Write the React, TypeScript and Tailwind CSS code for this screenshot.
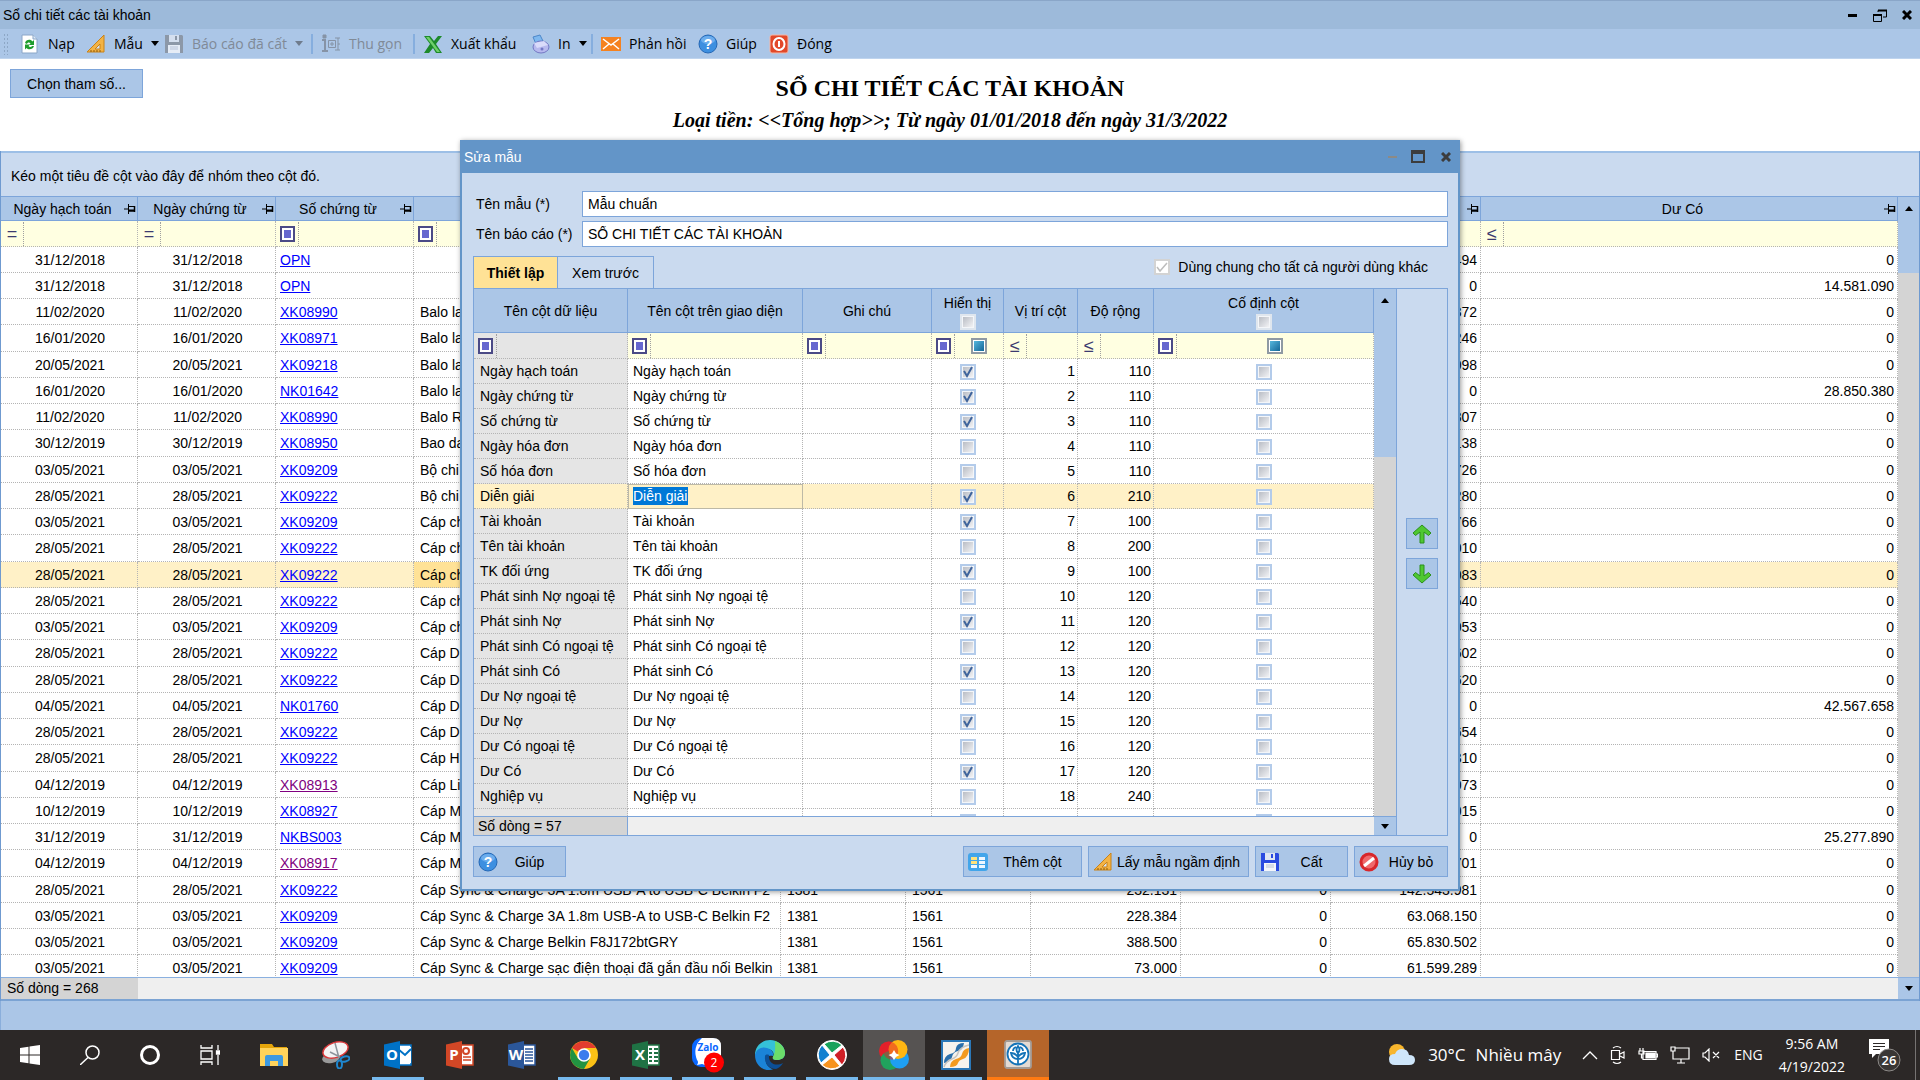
import type { ReactNode } from "react"
import clsx from "clsx"

/* ---------- data ---------- */

type Entry = {
  date: string
  code: string
  visited?: boolean
  desc?: string
  account?: string
  contra?: string
  debit?: string
  credit?: string
  balance: string
  creditBalance?: string
}

const CABLE = "Cáp Sync & Charge 3A 1.8m USB-A to USB-C Belkin F2"

const entries: Entry[] = [
  { date: "31/12/2018", code: "OPN", balance: "494" },
  { date: "31/12/2018", code: "OPN", balance: "0", creditBalance: "14.581.090" },
  { date: "11/02/2020", code: "XK08990", desc: "Balo la", balance: "372" },
  { date: "16/01/2020", code: "XK08971", desc: "Balo la", balance: "246" },
  { date: "20/05/2021", code: "XK09218", desc: "Balo la", balance: "098" },
  { date: "16/01/2020", code: "NK01642", desc: "Balo la", balance: "0", creditBalance: "28.850.380" },
  { date: "11/02/2020", code: "XK08990", desc: "Balo R", balance: "307" },
  { date: "30/12/2019", code: "XK08950", desc: "Bao da", balance: "138" },
  { date: "03/05/2021", code: "XK09209", desc: "Bộ chi", balance: "726" },
  { date: "28/05/2021", code: "XK09222", desc: "Bộ chi", balance: "280" },
  { date: "03/05/2021", code: "XK09209", desc: "Cáp ch", balance: "766" },
  { date: "28/05/2021", code: "XK09222", desc: "Cáp ch", balance: "010" },
  { date: "28/05/2021", code: "XK09222", desc: "Cáp ch", balance: "083" },
  { date: "28/05/2021", code: "XK09222", desc: "Cáp ch", balance: "540" },
  { date: "03/05/2021", code: "XK09209", desc: "Cáp ch", balance: "053" },
  { date: "28/05/2021", code: "XK09222", desc: "Cáp D", balance: "602" },
  { date: "28/05/2021", code: "XK09222", desc: "Cáp D", balance: "620" },
  { date: "04/05/2021", code: "NK01760", desc: "Cáp D", balance: "0", creditBalance: "42.567.658" },
  { date: "28/05/2021", code: "XK09222", desc: "Cáp D", balance: "654" },
  { date: "28/05/2021", code: "XK09222", desc: "Cáp HD", balance: "310" },
  { date: "04/12/2019", code: "XK08913", visited: true, desc: "Cáp Lig", balance: "073" },
  { date: "10/12/2019", code: "XK08927", desc: "Cáp M", balance: "015" },
  { date: "31/12/2019", code: "NKBS003", desc: "Cáp M", balance: "0", creditBalance: "25.277.890" },
  { date: "04/12/2019", code: "XK08917", visited: true, desc: "Cáp M", balance: "701" },
  { date: "28/05/2021", code: "XK09222", desc: CABLE, account: "1381", contra: "1561", debit: "232.131", credit: "0", balance: "142.543.981" },
  { date: "03/05/2021", code: "XK09209", desc: CABLE, account: "1381", contra: "1561", debit: "228.384", credit: "0", balance: "63.068.150" },
  { date: "03/05/2021", code: "XK09209", desc: "Cáp Sync & Charge Belkin F8J172btGRY", account: "1381", contra: "1561", debit: "388.500", credit: "0", balance: "65.830.502" },
  { date: "03/05/2021", code: "XK09209", desc: "Cáp Sync & Charge sạc điện thoại đã gắn đầu nối Belkin", account: "1381", contra: "1561", debit: "73.000", credit: "0", balance: "61.599.289" },
]
const SELECTED_ENTRY = 12

type Column = { name: string; shown: boolean; width: number }

const columns: Column[] = [
  { name: "Ngày hạch toán", shown: true, width: 110 },
  { name: "Ngày chứng từ", shown: true, width: 110 },
  { name: "Số chứng từ", shown: true, width: 110 },
  { name: "Ngày hóa đơn", shown: false, width: 110 },
  { name: "Số hóa đơn", shown: false, width: 110 },
  { name: "Diễn giải", shown: true, width: 210 },
  { name: "Tài khoản", shown: true, width: 100 },
  { name: "Tên tài khoản", shown: false, width: 200 },
  { name: "TK đối ứng", shown: true, width: 100 },
  { name: "Phát sinh Nợ ngoại tệ", shown: false, width: 120 },
  { name: "Phát sinh Nợ", shown: true, width: 120 },
  { name: "Phát sinh Có ngoại tệ", shown: false, width: 120 },
  { name: "Phát sinh Có", shown: true, width: 120 },
  { name: "Dư Nợ ngoại tệ", shown: false, width: 120 },
  { name: "Dư Nợ", shown: true, width: 120 },
  { name: "Dư Có ngoại tệ", shown: false, width: 120 },
  { name: "Dư Có", shown: true, width: 120 },
  { name: "Nghiệp vụ", shown: false, width: 240 },
]
const EDITED_COLUMN = 5

/* ---------- small icons ---------- */

const RefreshIcon = () => (
  <svg viewBox="0 0 20 20" className="size-5">
    <path d="M2 1h11l4 4v14H2z" fill="#fff" stroke="#8aa6c8" />
    <path d="M13 1v4h4" fill="#dbe8f6" stroke="#8aa6c8" />
    <path d="M5 9c1-4 6-4 7.500-1.500L14 6v5H9l1.500-1.500C9.500 8 7.500 8 7 10zM14 12c-1 4-6 4-7.500 2L5 15.500v-5h5L8.500 12c1 1.500 3 1.300 3.500 0z" fill="#1f9d2c" />
  </svg>
)

const RulerIcon = () => (
  <svg viewBox="0 0 20 20" className="size-5">
    <path d="M18 1v17H1z" fill="#f3b345" stroke="#c98218" />
    <path d="M14 10v5H9z" fill="#d5e3f5" stroke="#c98218" />
    <path d="M5 18v-2M8 18v-2M11 18v-2M14 18v-2" stroke="#8d5a0d" />
  </svg>
)

const FloppyIcon = ({ color }: { color: string }) => (
  <svg viewBox="0 0 20 20" className="size-5">
    <path d="M1 1h17l1 1v17H1z" fill={color} />
    <path d="M5 1h10v7H5z" fill="#dfe6f2" />
    <path d="M11 2h2v4h-2z" fill={color} />
    <path d="M4 11h12v8H4z" fill="#f4f6fa" />
    <path d="M6 13h8M6 15h8" stroke="#b9c2d4" />
  </svg>
)

const CollapseIcon = () => (
  <svg viewBox="0 0 20 20" className="size-5" fill="none" stroke="#7d8796">
    <path d="M1 6h3v11M1 17h6" strokeWidth="2" />
    <path d="M2 1h3v3H2z" fill="#7d8796" />
    <path d="M7.500 6.500h7v7h-7zM9 10h4M11 8v4M14 4h5M14 16h5M17 4v12M17 10h2" />
  </svg>
)

const ExcelXIcon = () => (
  <svg viewBox="0 0 20 20" className="size-5">
    <path d="M1 2h6l4 5 4-5h4l-6 8 6 9h-6l-3-5-4 5H1l6-9z" fill="#1d8a2a" />
    <path d="M3 3h3l11 15h-3z" fill="#6fd06a" />
  </svg>
)

const PrinterIcon = () => (
  <svg viewBox="0 0 20 20" className="size-5">
    <path d="M3 3l7-2 3 6-7 3z" fill="#7fb8ef" stroke="#4d87c9" />
    <ellipse cx="11" cy="13" rx="8" ry="6" fill="#b7b9ee" stroke="#7378c4" />
    <path d="M4 9l10-2 4 4-11 3z" fill="#d9dbfa" />
    <circle cx="12" cy="15" r="1.500" fill="#7378c4" />
  </svg>
)

const MailIcon = () => (
  <svg viewBox="0 0 20 20" className="size-5">
    <path d="M0 3h20v14H0z" fill="#f58220" />
    <path d="M2 5l8 6 8-6M2 15l6-5M18 15l-6-5" fill="none" stroke="#fff" strokeWidth="1.500" />
  </svg>
)

const HelpIcon = () => (
  <svg viewBox="0 0 20 20" className="size-5">
    <circle cx="10" cy="10" r="9" fill="#3d8fe0" stroke="#2467b5" />
    <ellipse cx="10" cy="6" rx="7" ry="4" fill="#8cc2f5" opacity="0.6" />
    <text x="10" y="15" textAnchor="middle" fontSize="14" fontWeight="700" fill="#fff" fontFamily="Liberation Sans, sans-serif">?</text>
  </svg>
)

const PowerIcon = () => (
  <svg viewBox="0 0 20 20" className="size-5">
    <rect x="1" y="1" width="18" height="18" rx="2" fill="#e2492a" stroke="#f4b7a6" />
    <ellipse cx="10" cy="10" rx="5.500" ry="6" fill="none" stroke="#fff" strokeWidth="2" />
    <path d="M10 7v6" stroke="#fff" strokeWidth="2" />
  </svg>
)

const AddColumnIcon = () => (
  <svg viewBox="0 0 20 20" className="size-5">
    <rect x="0" y="1" width="20" height="18" rx="3" fill="#42a5ea" />
    <path d="M3 5h6v3H3zM11 5h6v3h-6zM11 9h6v3h-6zM3 13h6v3H3zM11 13h6v3h-6z" fill="#eef7ff" />
    <path d="M3 9h6v3H3zM3 5h6v3H3z" fill="#ffe27a" />
  </svg>
)

const ForbidIcon = () => (
  <svg viewBox="0 0 20 20" className="size-5">
    <circle cx="10" cy="10" r="8" fill="#f0696b" stroke="#d8272b" strokeWidth="3" />
    <path d="M5 14L15 6" stroke="#fff" strokeWidth="3" />
  </svg>
)

const ArrowIcon = ({ down }: { down?: boolean }) => (
  <svg viewBox="0 0 20 20" className={clsx("size-5", down && "rotate-180")}>
    <path d="M10 1l9 8-2.500 2.500L12 8v11H8V8l-4.500 3.500L1 9z" fill="#4fc832" stroke="#2b8f1c" strokeLinejoin="round" />
  </svg>
)

const Pin = () => (
  <svg viewBox="0 0 12 10" className="h-[10px] w-3 shrink-0" fill="none" stroke="#000">
    <path d="M0 5h4M4.500 0v10M4.500 2.500h6M4.500 7h6" />
    <path d="M10.500 2v6" strokeWidth="1.500" />
    <path d="M5 6.500h6" strokeWidth="2" />
  </svg>
)

const Caret = ({ up, muted }: { up?: boolean; muted?: boolean }) => (
  <svg viewBox="0 0 8 5" className={clsx("h-[5px] w-2 shrink-0", up && "rotate-180")}>
    <path d="M0 0h8L4 5z" fill={muted ? "#6f7c8d" : "#000"} />
  </svg>
)

/* ---------- shared parts ---------- */

const BoxMark = () => (
  <span className="flex h-[16px] w-[15px] shrink-0 items-center justify-center border-2 border-[#4b4a86] bg-white">
    <span className="h-[8px] w-[7px] bg-[#6667cf]" />
  </span>
)

const OpMark = ({ op }: { op: string }) =>
  op === "box" ? <BoxMark /> : <span className="w-[15px] text-center text-lg leading-4 text-[#3b3a70]">{op}</span>

function FilterCell({ op, gray, children }: { op?: string; gray?: boolean; children?: ReactNode }) {
  return (
    <td className={clsx("border-r border-b border-dotted border-[#b4b4b4] p-0", gray ? "bg-[#e5e5e5]" : "bg-[#ffffe1]")}>
      {op && (
        <div className="flex h-[24px] items-center">
          <span className="flex h-full w-[23px] items-center justify-center border-r border-dotted border-[#a0a0a0]">
            <OpMark op={op} />
          </span>
          {children}
        </div>
      )}
    </td>
  )
}

function Tick({ label, checked, disabled, bare }: { label: string; checked?: boolean; disabled?: boolean; bare?: boolean }) {
  return (
    <span className="relative inline-block size-4 align-middle">
      <input
        type="checkbox"
        aria-label={label}
        defaultChecked={checked}
        disabled={disabled}
        className={clsx(
          "peer block size-4 appearance-none border-2",
          disabled ? "border-[#d3d3d3] bg-white" : "bg-linear-to-br from-[#b4b8c0] to-[#f8f8fa] shadow-[inset_0_0_0_1px_#f4f6f9]",
          !disabled && (bare ? "border-[#dfe6ee]" : "border-[#b3cbea]"),
        )}
      />
      <svg viewBox="0 0 16 16" className="pointer-events-none absolute inset-0 hidden size-4 peer-checked:block">
        <path d={disabled ? "M3 8l3 4 7-8" : "M4 7l3 5 5-9"} fill="none" stroke={disabled ? "#bdbdbd" : "#3f649c"} strokeWidth={disabled ? 1.5 : 2} />
      </svg>
    </span>
  )
}

const MixedBox = () => (
  <span className="block size-4 border-2 border-[#8f9aa3] bg-linear-to-br from-[#5cc0e4] to-[#075f91] outline-1 -outline-offset-3 outline-white" />
)

/* ---------- main window ---------- */

type ToolProps = { icon: ReactNode; label: string; size: string; menu?: boolean; muted?: boolean; divider?: boolean }

const ToolButton = ({ icon, label, size, menu, muted, divider }: ToolProps) => (
  <button
    type="button"
    disabled={muted}
    className={clsx("flex h-5 shrink-0 items-center gap-2 whitespace-nowrap", size, muted && "text-[#808a97]", divider && "mr-2 border-r-2 border-[#86aede]")}
  >
    <span className={clsx(muted && "opacity-80")}>{icon}</span>
    {label}
    {menu && <Caret muted={muted} />}
  </button>
)

function Toolbar() {
  return (
    <div className="flex h-[30px] items-center border-b border-[#bfd4ee] bg-[#abc6e7] pl-[3px] font-['Open_Sans',sans-serif] text-sm">
      <span className="mr-[11px] h-[22px] w-[6px] bg-[radial-gradient(#8da7c6_1px,transparent_1px)] bg-size-[3px_4px]" />
      <ToolButton icon={<RefreshIcon />} label="Nạp" size="w-[66px]" />
      <ToolButton icon={<RulerIcon />} label="Mẫu" size="w-[78px]" menu />
      <ToolButton icon={<FloppyIcon color="#858d99" />} label="Báo cáo đã cất" size="w-[149px]" menu muted divider />
      <ToolButton icon={<CollapseIcon />} label="Thu gọn" size="w-[94px]" muted divider />
      <ToolButton icon={<ExcelXIcon />} label="Xuất khẩu" size="w-[107px]" />
      <ToolButton icon={<PrinterIcon />} label="In" size="w-[63px]" menu divider />
      <ToolButton icon={<MailIcon />} label="Phản hồi" size="w-[97px]" />
      <ToolButton icon={<HelpIcon />} label="Giúp" size="w-[71px]" />
      <ToolButton icon={<PowerIcon />} label="Đóng" size="w-[71px]" />
    </div>
  )
}

const HeadCell = ({ children }: { children?: ReactNode }) => (
  <th className="border-r border-b border-[#7da5da] bg-[#abc6e7] p-0 font-normal">
    <div className="flex h-[22px] items-center pr-px">
      <span className="flex-1 text-center">{children}</span>
      <Pin />
    </div>
  </th>
)

const cell = "overflow-hidden border-r border-b border-dotted border-[#b4b4b4] p-0 whitespace-nowrap"

function LedgerTable() {
  return (
    <table className="w-full table-fixed border-separate border-spacing-0">
      <colgroup>
        <col className="w-[137px]" />
        <col className="w-[138px]" />
        <col className="w-[138px]" />
        <col className="w-[367px]" />
        <col className="w-[125px]" />
        <col className="w-[125px]" />
        <col className="w-[150px]" />
        <col className="w-[150px]" />
        <col className="w-[150px]" />
        <col />
      </colgroup>
      <thead>
        <tr className="h-[24px]">
          <HeadCell>Ngày hạch toán</HeadCell>
          <HeadCell>Ngày chứng từ</HeadCell>
          <HeadCell>Số chứng từ</HeadCell>
          <HeadCell />
          <HeadCell />
          <HeadCell />
          <HeadCell />
          <HeadCell />
          <HeadCell />
          <HeadCell>Dư Có</HeadCell>
        </tr>
        <tr className="h-[26px]">
          <FilterCell op="=" />
          <FilterCell op="=" />
          <FilterCell op="box" />
          <FilterCell op="box" />
          <FilterCell />
          <FilterCell />
          <FilterCell />
          <FilterCell />
          <FilterCell />
          <FilterCell op="≤" />
        </tr>
      </thead>
      <tbody className="[&>tr:nth-child(4n)]:h-[27px]">
        {entries.map((e, i) => (
          <tr key={i} className={clsx("h-[26px]", i === SELECTED_ENTRY && "bg-[#fff1c7]")}>
            <td className={clsx(cell, "pl-[2px] text-center")}>{e.date}</td>
            <td className={clsx(cell, "pl-[2px] text-center")}>{e.date}</td>
            <td className={clsx(cell, "pl-1")}>
              <a href="#" className={clsx("underline", e.visited ? "text-[#800080]" : "text-[#0000ff]")}>
                {e.code}
              </a>
            </td>
            <td className={clsx(cell, "pl-[6px]", i === SELECTED_ENTRY && "bg-[#ffe296]")}>{e.desc}</td>
            <td className={clsx(cell, "pl-[6px]")}>{e.account}</td>
            <td className={clsx(cell, "pl-[6px]")}>{e.contra}</td>
            <td className={clsx(cell, "pr-[3px] text-right")}>{e.debit}</td>
            <td className={clsx(cell, "pr-[3px] text-right")}>{e.credit}</td>
            <td className={clsx(cell, "pr-[3px] text-right")}>{e.balance}</td>
            <td className={clsx(cell, "pr-[3px] text-right")}>{e.creditBalance ?? "0"}</td>
          </tr>
        ))}
      </tbody>
    </table>
  )
}

function MainWindow() {
  return (
    <main className="flex min-h-0 flex-1 flex-col bg-white">
      <header className="flex h-[29px] items-center border-t border-[#8aa6c8] bg-[#9dbada] pr-2 pl-[3px]">
        <h1 className="flex-1">Sổ chi tiết các tài khoản</h1>
        <button type="button" aria-label="Thu nhỏ" className="flex h-5 w-[25px] items-center">
          <span className="h-[3px] w-[9px] bg-black" />
        </button>
        <button type="button" aria-label="Khôi phục" className="w-[29px]">
          <svg viewBox="0 0 14 13" className="h-[13px] w-[14px]" fill="none" stroke="#000">
            <path d="M5 3V1.500h8.500V8H10" />
            <path d="M5 1.500h9M0 6h9" strokeWidth="2" />
            <path d="M.5 5.500h8v7h-8z" />
          </svg>
        </button>
        <button type="button" aria-label="Đóng">
          <svg viewBox="0 0 10 10" className="size-[10px]">
            <path d="M1 1l8 8M9 1L1 9" stroke="#000" strokeWidth="3" />
          </svg>
        </button>
      </header>
      <Toolbar />
      <section className="flex h-[92px] items-start pt-[10px] pr-[10px] pl-[10px]">
        <button type="button" className="h-[29px] w-[133px] border border-[#7da5da] bg-[#abc6e7]">
          Chọn tham số...
        </button>
        <div className="flex-1 pt-[3px] pr-[153px] text-center font-['Liberation_Serif',serif]">
          <h2 className="text-2xl leading-8 font-bold">SỔ CHI TIẾT CÁC TÀI KHOẢN</h2>
          <p className="text-xl leading-8 font-bold italic">
            Loại tiền: &lt;&lt;Tổng hợp&gt;&gt;; Từ ngày 01/01/2018 đến ngày 31/3/2022
          </p>
        </div>
      </section>
      <section className="flex min-h-0 flex-1 flex-col border-x border-[#6f9ad0]">
        <p className="flex h-[46px] items-center border-t-2 border-b border-t-[#9dbfe6] border-b-[#7da5da] bg-[#cadaef] pt-[3px] pl-[10px]">
          Kéo một tiêu đề cột vào đây để nhóm theo cột đó.
        </p>
        <div className="flex min-h-0 flex-1 border-b border-[#8ab0e0]">
          <div className="min-w-0 flex-1 overflow-hidden">
            <LedgerTable />
          </div>
          <div className="w-[21px] bg-[#d4d4d4]">
            <div className="flex h-[76px] justify-center bg-[#abc6e7] pt-[9px]">
              <Caret up />
            </div>
          </div>
        </div>
        <div className="flex h-[23px] border-b-2 border-[#7ba3d3] bg-[#efefef]">
          <span className="w-[137px] bg-[#d4d4d4] pl-[6px]">Số dòng = 268</span>
          <span className="ml-auto flex w-[21px] items-center justify-center bg-[#abc6e7]">
            <Caret />
          </span>
        </div>
      </section>
      <div className="h-[29px] border-l border-[#8aaedb] bg-[#abc6e7]" />
    </main>
  )
}

/* ---------- dialog ---------- */

const field = "h-[26px] flex-1 border border-[#7da5da] bg-white px-[5px] outline-none"
const dialogHead = "border-r border-b border-[#7da5da] bg-[#abc6e7] p-0 font-normal"

function ColumnTable() {
  return (
    <table className="w-full table-fixed border-separate border-spacing-0 bg-white">
      <colgroup>
        <col className="w-[154px]" />
        <col className="w-[175px]" />
        <col className="w-[129px]" />
        <col className="w-[72px]" />
        <col className="w-[74px]" />
        <col className="w-[76px]" />
        <col />
      </colgroup>
      <thead>
        <tr className="h-[44px]">
          <th className={dialogHead}>Tên cột dữ liệu</th>
          <th className={dialogHead}>Tên cột trên giao diện</th>
          <th className={dialogHead}>Ghi chú</th>
          <th className={dialogHead}>
            <div className="flex flex-col items-center leading-[22px]">
              Hiển thị <Tick label="Hiển thị tất cả" bare />
            </div>
          </th>
          <th className={dialogHead}>Vị trí cột</th>
          <th className={dialogHead}>Độ rộng</th>
          <th className={dialogHead}>
            <div className="flex flex-col items-center leading-[22px]">
              Cố định cột <Tick label="Cố định tất cả" bare />
            </div>
          </th>
        </tr>
        <tr className="h-[26px]">
          <FilterCell op="box" gray />
          <FilterCell op="box" />
          <FilterCell op="box" />
          <FilterCell op="box">
            <span className="flex flex-1 justify-center">
              <MixedBox />
            </span>
          </FilterCell>
          <FilterCell op="≤" />
          <FilterCell op="≤" />
          <FilterCell op="box">
            <span className="flex flex-1 justify-center">
              <MixedBox />
            </span>
          </FilterCell>
        </tr>
      </thead>
      <tbody>
        {columns.map((c, i) => {
          const editing = i === EDITED_COLUMN
          return (
            <tr key={c.name} className={clsx("h-[25px]", editing && "bg-[#fff1c7]")}>
              <td className={clsx(cell, "pl-[6px]", !editing && "bg-[#e5e5e5]")}>{c.name}</td>
              <td className={clsx(cell, "pl-[5px]", editing && "outline-1 -outline-offset-1 outline-[#bdb9a6]")}>
                {editing ? (
                  <input aria-label="Tên cột trên giao diện" defaultValue={c.name} className="field-sizing-content h-[18px] bg-[#0078d7] pr-px text-white outline-none" />
                ) : (
                  c.name
                )}
              </td>
              <td className={cell} />
              <td className={clsx(cell, "text-center leading-4")}>
                <Tick label={"Hiển thị " + c.name} checked={c.shown} />
              </td>
              <td className={clsx(cell, "pr-[2px] text-right")}>{i + 1}</td>
              <td className={clsx(cell, "pr-[2px] text-right")}>{c.width}</td>
              <td className={clsx(cell, "text-center leading-4")}>
                <Tick label={"Cố định " + c.name} />
              </td>
            </tr>
          )
        })}
        <tr className="h-[25px]">
          <td className={clsx(cell, "bg-[#e5e5e5]")} />
          <td className={cell} />
          <td className={cell} />
          <td className={clsx(cell, "text-center leading-4")}>
            <Tick label="Hiển thị" />
          </td>
          <td className={cell} />
          <td className={cell} />
          <td className={clsx(cell, "text-center leading-4")}>
            <Tick label="Cố định" />
          </td>
        </tr>
      </tbody>
    </table>
  )
}

const DialogButton = ({ icon, label, size }: { icon: ReactNode; label: string; size: string }) => (
  <button type="button" className={clsx("flex h-[31px] items-center border border-[#7da5da] bg-[#abc6e7] px-1 whitespace-nowrap", size)}>
    {icon}
    <span className="flex-1 text-center">{label}</span>
  </button>
)

function EditTemplateDialog() {
  return (
    <div role="dialog" aria-label="Sửa mẫu" className="absolute top-[140px] right-[460px] left-[460px] border-x-2 border-b-2 border-[#6395c8] bg-[#cadaef] shadow-[1px_1px_5px_rgba(0,0,0,0.4)]">
      <div className="flex h-[33px] items-center bg-[#6395c8] pr-[7px] pl-[2px]">
        <h2 className="flex-1 text-white">Sửa mẫu</h2>
        <button type="button" aria-label="Thu nhỏ" className="flex h-5 w-[23px] items-center">
          <span className="h-[2px] w-[9px] bg-[#8c8a86]" />
        </button>
        <button type="button" aria-label="Phóng to" className="w-[30px]">
          <span className="block h-[13px] w-[14px] border-2 border-t-4 border-[#3c3c3c]" />
        </button>
        <button type="button" aria-label="Đóng">
          <svg viewBox="0 0 10 10" className="size-[10px]">
            <path d="M1 1l8 8M9 1L1 9" stroke="#3c3c3c" strokeWidth="3" />
          </svg>
        </button>
      </div>
      <div className="pt-[18px] pr-[10px] pb-3 pl-[11px]">
        <div className="flex flex-col gap-1">
          <div className="flex items-center">
            <label htmlFor="template" className="w-[109px] pl-[3px]">
              Tên mẫu (*)
            </label>
            <input id="template" defaultValue="Mẫu chuẩn" className={field} />
          </div>
          <div className="flex items-center">
            <label htmlFor="report" className="w-[109px] pl-[3px]">
              Tên báo cáo (*)
            </label>
            <input id="report" defaultValue="SỔ CHI TIẾT CÁC TÀI KHOẢN" className={field} />
          </div>
        </div>
        <div className="mt-[9px] flex items-start">
          <div role="tablist" className="flex">
            <button type="button" role="tab" aria-selected="true" className="h-8 w-[85px] border border-b-0 border-[#7da5da] bg-[#ffe296] font-bold">
              Thiết lập
            </button>
            <button type="button" role="tab" aria-selected="false" className="h-8 w-[96px] border-t border-r border-[#7da5da]">
              Xem trước
            </button>
          </div>
          <label className="mt-px mr-[20px] ml-auto flex items-center gap-2">
            <Tick label="Dùng chung cho tất cả người dùng khác" checked disabled />
            Dùng chung cho tất cả người dùng khác
          </label>
        </div>
        <div className="flex border border-[#7da5da]">
          <div className="flex min-w-0 flex-1 flex-col">
            <div className="flex">
              <div className="h-[527px] min-w-0 flex-1 overflow-hidden">
                <ColumnTable />
              </div>
              <div className="w-[22px] bg-[#d4d4d4]">
                <div className="flex h-[168px] justify-center bg-[#abc6e7] pt-[9px]">
                  <Caret up />
                </div>
              </div>
            </div>
            <div className="flex h-[19px] border-t border-[#7da5da] bg-[#efefef] leading-[18px]">
              <span className="w-[154px] border-r border-[#7da5da] bg-[#d4d4d4] pl-1">Số dòng = 57</span>
              <span className="ml-auto flex w-[22px] items-center justify-center bg-[#abc6e7]">
                <Caret />
              </span>
            </div>
          </div>
          <div className="flex w-[51px] flex-col items-center justify-center gap-[9px] border-l border-[#7da5da] pb-[17px]">
            <button type="button" aria-label="Lên" className="flex h-[31px] w-8 items-center justify-center border border-[#7da5da] bg-[#abc6e7]">
              <ArrowIcon />
            </button>
            <button type="button" aria-label="Xuống" className="flex h-[31px] w-8 items-center justify-center border border-[#7da5da] bg-[#abc6e7]">
              <ArrowIcon down />
            </button>
          </div>
        </div>
        <div className="mt-[10px] flex gap-[6px]">
          <DialogButton icon={<HelpIcon />} label="Giúp" size="mr-auto w-[93px]" />
          <DialogButton icon={<AddColumnIcon />} label="Thêm cột" size="w-[119px]" />
          <DialogButton icon={<RulerIcon />} label="Lấy mẫu ngầm định" size="w-[161px]" />
          <DialogButton icon={<FloppyIcon color="#2a4be0" />} label="Cất" size="w-[93px]" />
          <DialogButton icon={<ForbidIcon />} label="Hủy bỏ" size="w-[94px]" />
        </div>
      </div>
    </div>
  )
}

/* ---------- taskbar ---------- */

const OfficeIcon = ({ letter, dark, light, children }: { letter: string; dark: string; light: string; children: ReactNode }) => (
  <svg viewBox="0 0 28 28" className="size-7">
    <path d="M13 4h14v20H13z" fill="#fff" stroke={light} strokeWidth="1.500" />
    {children}
    <path d="M0 3.500L16 0v28L0 24.500z" fill={dark} />
    <text x="8" y="19" textAnchor="middle" fontSize="15" fontWeight="700" fill="#fff" fontFamily="Open Sans, sans-serif">{letter}</text>
  </svg>
)

const apps: { name: string; open?: boolean; tone?: string; icon: ReactNode }[] = [
  {
    name: "File Explorer",
    icon: (
      <svg viewBox="0 0 28 28" className="size-7">
        <path d="M0 3h12l2 3h13v8H0z" fill="#e5a50a" />
        <path d="M0 7h28v18H0z" fill="#ffd35b" />
        <path d="M5 16q0-2 2-2h14q2 0 2 2v9h-5v-5h-8v5H5z" fill="#3d99e0" />
      </svg>
    ),
  },
  {
    name: "Snipping Tool",
    icon: (
      <svg viewBox="0 0 28 28" className="size-7" fill="none">
        <ellipse cx="9" cy="17" rx="9" ry="5" fill="#9a9a9a" transform="rotate(-12 9 17)" />
        <ellipse cx="13.500" cy="9" rx="13" ry="7.500" fill="#f4f4f4" stroke="#d9383a" strokeWidth="1.500" transform="rotate(-18 13.500 9)" />
        <path d="M13 2l4 15M8 11l10 5" stroke="#8d949b" strokeWidth="1.500" />
        <ellipse cx="23" cy="18" rx="4.500" ry="2.500" stroke="#1f87cf" strokeWidth="2" transform="rotate(-15 23 18)" />
        <ellipse cx="17.500" cy="23.500" rx="2.500" ry="4" stroke="#1f87cf" strokeWidth="2" />
      </svg>
    ),
  },
  {
    name: "Outlook",
    open: true,
    icon: (
      <OfficeIcon letter="O" dark="#0072c6" light="#0072c6">
        <path d="M15 6h12v16H15z" fill="#fff" />
        <path d="M14 8l7 6 6-6" fill="none" stroke="#0072c6" strokeWidth="2" />
      </OfficeIcon>
    ),
  },
  {
    name: "PowerPoint",
    icon: (
      <OfficeIcon letter="P" dark="#d24726" light="#d24726">
        <circle cx="20" cy="10" r="3" fill="none" stroke="#d24726" strokeWidth="2" />
        <path d="M17 16h8M17 19h8" stroke="#d24726" strokeWidth="1.500" />
      </OfficeIcon>
    ),
  },
  {
    name: "Word",
    icon: (
      <OfficeIcon letter="W" dark="#2b579a" light="#2b579a">
        <path d="M17 8h8M17 11h8M17 14h8M17 17h8M17 20h8" stroke="#2b579a" strokeWidth="1.500" />
      </OfficeIcon>
    ),
  },
  {
    name: "Chrome",
    open: true,
    icon: (
      <svg viewBox="0 0 28 28" className="size-7">
        <circle cx="14" cy="14" r="14" fill="#fbc116" />
        <path d="M14 14L1.900 7A14 14 0 0 1 26.100 7H14z" fill="#e33b2e" />
        <path d="M1.900 7A14 14 0 0 0 14 28l6-10.500L8 17.500z" fill="#229342" />
        <circle cx="14" cy="14" r="6.800" fill="#fff" />
        <circle cx="14" cy="14" r="5.200" fill="#3b7ded" />
      </svg>
    ),
  },
  {
    name: "Excel",
    open: true,
    icon: (
      <OfficeIcon letter="X" dark="#1f7244" light="#1f7244">
        <path d="M17 8h3M22 8h4M17 12h3M22 12h4M17 16h3M22 16h4M17 20h3M22 20h4" stroke="#1f7244" strokeWidth="2" />
      </OfficeIcon>
    ),
  },
  {
    name: "Zalo",
    open: true,
    icon: (
      <svg viewBox="0 0 32 36" className="h-9 w-8">
        <rect x="0" y="1" width="29" height="29" rx="9" fill="#0a68ff" />
        <path d="M10 1h11q8 0 8 8v11q0 9-9 9-6 0-10-2l-5 1q2-3 0-5-5-13 5-22z" fill="#fff" />
        <text x="16" y="14" textAnchor="middle" fontSize="10" fontWeight="700" fill="#0a68ff" fontFamily="Open Sans, sans-serif">Zalo</text>
        <circle cx="22" cy="25.500" r="10" fill="#f00" />
        <text x="22" y="30" textAnchor="middle" fontSize="12" fill="#fff" fontFamily="Open Sans, sans-serif">2</text>
      </svg>
    ),
  },
  {
    name: "Edge",
    open: true,
    icon: (
      <svg viewBox="0 0 30 30" className="size-[30px]">
        <path d="M0 15C0 6 7 0 15 0s15 6 15 13c0 5-4 7-8 7-3 0-5-1-4-3 2-4-1-8-6-8-6 0-10 5-12 6z" fill="#35c1d8" />
        <path d="M20 1c6 2 10 7 10 12 0 5-4 7-8 7-3 0-5-1-4-3 3-5 2-12 2-16z" fill="#6bdc6a" />
        <path d="M0 15c1-6 7-9 12-7 4 1 7 4 6 8-7-2-10 6-4 11 1 1 3 2 4 2.500C8 32 0 25 0 15z" fill="#1b84d8" />
        <path d="M10 16c-1 7 4 13 11 13 3-1 6-4 7-6-8 4-15 0-14-8-2-1-4 0-4 1z" fill="#0c4f96" />
      </svg>
    ),
  },
  {
    name: "UltraViewer",
    open: true,
    icon: (
      <svg viewBox="0 0 30 30" className="size-[30px]" stroke="#fff">
        <circle cx="15" cy="15" r="14.500" fill="#fff" />
        <path d="M7 4A14 14 0 0 1 25 5L15 13z" fill="#17a25b" />
        <path d="M26 7A14 14 0 0 1 25 25L17 15z" fill="#cf1f26" />
        <path d="M23 26A14 14 0 0 1 5 25L15 17z" fill="#f7931e" />
        <path d="M4 23A14 14 0 0 1 5 5L13 15z" fill="#1180d0" />
      </svg>
    ),
  },
  {
    name: "MISA",
    open: true,
    tone: "bg-[#565352]",
    icon: (
      <svg viewBox="0 0 30 30" className="size-[30px]">
        <circle cx="9.500" cy="11" r="9.500" fill="#e3202a" />
        <circle cx="11" cy="20.500" r="9.500" fill="#21a35d" />
        <circle cx="20.500" cy="19" r="9.500" fill="#1e9ff2" />
        <circle cx="19" cy="9.500" r="9.500" fill="#ffb612" />
        <path d="M9.500 1.500a9.500 9.500 0 0 1 4 18.200A9.500 9.500 0 0 1 9.500 1.500z" fill="#e3202a" opacity="0.5" />
        <path d="M15 10l2 3.500 3.500 1.500-3.500 2L15 20l-2-3-3.500-2 3.500-1.500z" fill="#fff" />
      </svg>
    ),
  },
  {
    name: "Foxit",
    open: true,
    icon: (
      <svg viewBox="0 0 30 30" className="size-[30px]">
        <rect x="1" y="1" width="28" height="28" fill="#f6f3ee" stroke="#2b78b8" strokeWidth="2" />
        <path d="M3 23q0-7 6-9 6-1 6-6 1-5 8-5-1 7-6 8-5 1-6 6-1 5-8 6z" fill="#2a6fab" />
        <path d="M9 27q0-6 6-8 5-1 6-5 1-5 7-6 0 9-6 11-4 1-5 4-1 4-8 4z" fill="#f39a1f" />
        <path d="M3 27q2-6 8-8 5-2 6-6 2-6 11-8" fill="none" stroke="#c8c4bf" strokeWidth="1.500" />
      </svg>
    ),
  },
  {
    name: "MISA SME",
    open: true,
    tone: "bg-[#b5652a]",
    icon: (
      <svg viewBox="0 0 30 30" className="size-[30px]" fill="none" stroke="#1473b8" strokeWidth="1.800">
        <rect x="2" y="1" width="26" height="27" rx="2" fill="#e3dad2" stroke="#a39b95" />
        <circle cx="15" cy="14" r="10.500" fill="#fff" />
        <path d="M15 24V13M15 19q-6 0-7-6 4 0 7 4M15 19q6 0 7-6-4 0-7 4M15 13q-3-3 0-7 3 4 0 7M10 11q0-3 3-4M20 11q0-3-3-4" />
      </svg>
    ),
  },
]

function Taskbar() {
  return (
    <footer className="flex h-[50px] shrink-0 items-stretch bg-[#2c2827] font-['Open_Sans','Noto_Sans',sans-serif] text-white">
      <button type="button" aria-label="Start" className="flex w-[60px] items-center justify-center">
        <svg viewBox="0 0 20 20" className="size-5" fill="#fff">
          <path d="M0 3l8.500-1.200v7.700H0zM9.500 1.600L20 0v9.500H9.500zM0 10.500h8.500v7.700L0 17zM9.500 10.500H20V20L9.500 18.400z" />
        </svg>
      </button>
      <button type="button" aria-label="Search" className="flex w-[60px] items-center justify-center">
        <svg viewBox="0 0 20 20" className="size-5" fill="none" stroke="#fff" strokeWidth="1.500">
          <circle cx="12.500" cy="7.500" r="6.500" />
          <path d="M8 12.500L0 20" />
        </svg>
      </button>
      <button type="button" aria-label="Cortana" className="flex w-[60px] items-center justify-center">
        <span className="size-5 rounded-full border-3 border-white" />
      </button>
      <button type="button" aria-label="Task View" className="mr-[3px] flex w-[60px] items-center justify-center">
        <svg viewBox="0 0 20 20" className="size-5" fill="none" stroke="#fff" strokeWidth="1.300">
          <path d="M1 0v3h11V0M1 6h11v8H1zM1 20v-3h11v3M18 0v5M18 10v10" />
          <path d="M16.500 6h3v3h-3z" fill="#fff" />
        </svg>
      </button>
      {apps.map((a) => (
        <button key={a.name} type="button" aria-label={a.name} className={clsx("relative flex w-[62px] items-center justify-center", a.tone)}>
          {a.icon}
          {a.open && (
            <span className={clsx("absolute bottom-0 h-[3px]", a.tone ? "inset-x-0" : "inset-x-[5px]", a.name === "MISA SME" ? "bg-[#ff7a12]" : "bg-[#76b9ed]")} />
          )}
        </button>
      ))}
      <div className="ml-auto flex items-center">
        <svg viewBox="0 0 28 24" className="mr-3 h-6 w-7">
          <circle cx="9" cy="9" r="8" fill="#f8b62d" />
          <path d="M7 22q-6 0-6-6 0-5 6-5 2-5 7-5 6 0 7 6 6 0 6 5 0 5-6 5z" fill="#cfe6fa" />
        </svg>
        <span className="mr-[21px] flex gap-[10px] text-[17px]">
          <span>30°C</span>
          <span>Nhiều mây</span>
        </span>
        <div className="flex items-center gap-3">
          <svg viewBox="0 0 16 10" className="h-[10px] w-4" fill="none" stroke="#fff" strokeWidth="1.300">
            <path d="M1 9l7-7 7 7" />
          </svg>
          <svg viewBox="0 0 16 20" className="h-5 w-4" fill="none" stroke="#fff" strokeWidth="1.200">
            <path d="M1.500 5.500h8v9h-8zM10 9l4-2v6l-4-2M3 3q4-3 8 0M3 17q4 3 8 0" />
          </svg>
          <svg viewBox="0 0 20 16" className="h-4 w-5" fill="none" stroke="#fff" strokeWidth="1.200">
            <path d="M5 4.500h13v8H5zM18 7h1.500v3H18M2 1v3M5 1v3M1 4h5v3H1zM3.500 7v4H5" />
            <path d="M8 6h9v5H8z" fill="#fff" />
          </svg>
          <svg viewBox="0 0 20 18" className="h-[18px] w-5" fill="none" stroke="#fff" strokeWidth="1.200">
            <path d="M5 2h14v11H3V7M11 13v4M7 17h8M1 1h4v4H1zM3 5v3" />
          </svg>
          <svg viewBox="0 0 18 14" className="h-[14px] w-[18px]" fill="none" stroke="#fff" strokeWidth="1.200">
            <path d="M1 5h2l4-4v12L3 9H1zM11 4l6 6M17 4l-6 6" />
          </svg>
        </div>
        <span className="ml-[14px] text-sm">ENG</span>
        <div className="ml-4 text-center text-sm leading-[23px]">
          <p>9:56 AM</p>
          <p>4/19/2022</p>
        </div>
        <button type="button" aria-label="Notifications" className="mr-[11px] ml-[23px]">
          <svg viewBox="0 0 36 34" className="h-[34px] w-9">
            <path d="M1 1h20v15H8l-4 4v-4H1z" fill="#fff" />
            <path d="M5 5.500h12M5 8.500h12M5 11.500h7" stroke="#2c2827" />
            <circle cx="21" cy="22" r="11" fill="#3a3735" stroke="#8d8a88" />
            <text x="21" y="27" textAnchor="middle" fontSize="13" fontWeight="600" fill="#fff" fontFamily="Open Sans, sans-serif">26</text>
          </svg>
        </button>
      </div>
      <span className="w-[5px] border-l border-[#767372]" />
    </footer>
  )
}

export default function App() {
  return (
    <div className="relative flex h-screen flex-col overflow-hidden font-['Liberation_Sans',Arial,sans-serif] text-sm text-black">
      <MainWindow />
      <EditTemplateDialog />
      <Taskbar />
    </div>
  )
}
